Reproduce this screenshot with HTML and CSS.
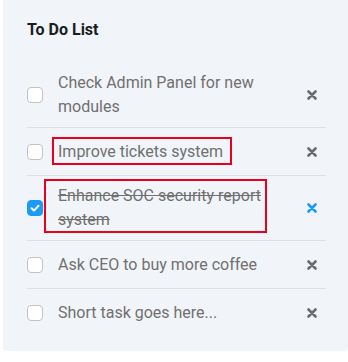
FILE: index.html
```html
<!DOCTYPE html>
<html lang="en">
<head>
  <meta charset="UTF-8" />
  <title>To Do List</title>
  <link rel="stylesheet" href="styles.css">
</head>
<body>
  <div class="todo-card">
    <h2 class="todo-title">To Do List</h2>
    <ul class="todo-list">
      <li class="todo-item">
        <span class="check"></span>
        <span class="todo-text">Check Admin Panel for new modules</span>
        <button class="remove" aria-label="Remove">
          <svg viewBox="0 0 10 10" width="10" height="10"><path d="M1.5 1.5L8.5 8.5M8.5 1.5L1.5 8.5" /></svg>
        </button>
      </li>
      <li class="todo-item">
        <span class="check"></span>
        <span class="todo-text">Improve tickets system<span class="mark mark-short"></span></span>
        <button class="remove" aria-label="Remove">
          <svg viewBox="0 0 10 10" width="10" height="10"><path d="M1.5 1.5L8.5 8.5M8.5 1.5L1.5 8.5" /></svg>
        </button>
      </li>
      <li class="todo-item done">
        <span class="check">
          <svg viewBox="0 0 16 16" width="16" height="16"><path d="M4.5 8.3L7 10.6L11.5 5.8" /></svg>
        </span>
        <span class="todo-text">Enhance SOC security report system<span class="mark mark-long"></span></span>
        <button class="remove" aria-label="Remove">
          <svg viewBox="0 0 10 10" width="10" height="10"><path d="M1.5 1.5L8.5 8.5M8.5 1.5L1.5 8.5" /></svg>
        </button>
      </li>
      <li class="todo-item">
        <span class="check"></span>
        <span class="todo-text">Ask CEO to buy more coffee</span>
        <button class="remove" aria-label="Remove">
          <svg viewBox="0 0 10 10" width="10" height="10"><path d="M1.5 1.5L8.5 8.5M8.5 1.5L1.5 8.5" /></svg>
        </button>
      </li>
      <li class="todo-item">
        <span class="check"></span>
        <span class="todo-text">Short task goes here...</span>
        <button class="remove" aria-label="Remove">
          <svg viewBox="0 0 10 10" width="10" height="10"><path d="M1.5 1.5L8.5 8.5M8.5 1.5L1.5 8.5" /></svg>
        </button>
      </li>
    </ul>
  </div>
</body>
</html>
```

FILE: styles.css
```css
body {
  margin: 0;
  background-color: #fff;
  font-family: Roboto, "Liberation Sans", sans-serif;
  overflow: hidden;
}

.todo-card {
  margin-left: 3px;
  background-color: #f1f4f8;
  border-radius: 0 0 4px 4px;
  padding: 18px 22px 14px 24px;
}

.todo-title {
  margin: 0 0 21px;
  font-size: 16px;
  line-height: 24px;
  font-weight: 700;
  color: #1b1e21;
}

.todo-list {
  list-style: none;
  margin: 0;
  padding: 0;
}

.todo-item {
  display: flex;
  align-items: center;
  box-sizing: border-box;
  min-height: 48px;
  padding: 8px 0;
  border-bottom: 1px solid #dde1e6;
}

.todo-item:last-child {
  border-bottom: none;
}

.check {
  flex: none;
  box-sizing: border-box;
  width: 16px;
  height: 16px;
  margin-right: 15px;
  background-color: #fff;
  border: 1px solid #c2c2c2;
  border-radius: 4px;
  display: flex;
}

.check svg {
  margin: -1px;
  fill: none;
  stroke: #fff;
  stroke-width: 2;
  stroke-linecap: round;
  stroke-linejoin: round;
}

.done .check {
  background-color: #1c9bf6;
  border-color: #1c9bf6;
}

.todo-text {
  position: relative;
  flex: 1;
  font-size: 16px;
  line-height: 24px;
  color: #707070;
}

.done .todo-text {
  text-decoration: line-through;
}

.mark {
  position: absolute;
  border: 2px solid #e8001c;
}

.mark-short {
  top: -3px;
  bottom: -1px;
  left: -6px;
  right: 66px;
}

.mark-long {
  top: -5px;
  bottom: -1px;
  left: -14px;
  right: 31px;
}

.remove {
  flex: none;
  width: 28px;
  height: 24px;
  padding: 0;
  border: none;
  background: none;
  display: flex;
  align-items: center;
  justify-content: center;
}

.remove svg {
  stroke: #6b6b6b;
  stroke-width: 2.6;
  stroke-linecap: round;
}

.done .remove svg {
  stroke: #1c9bf6;
}
```
